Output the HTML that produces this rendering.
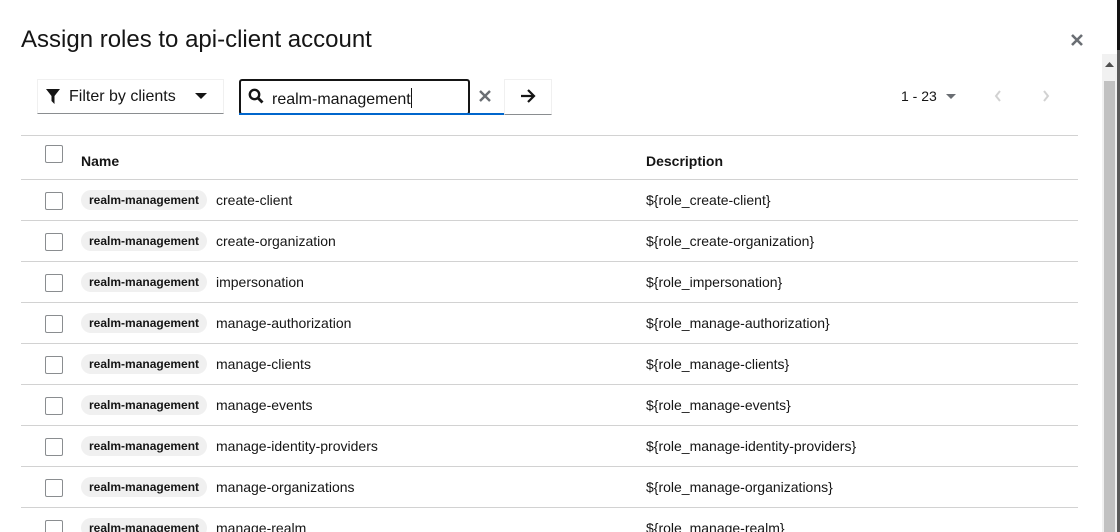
<!DOCTYPE html><html style="height:532px;overflow:hidden"><head><style>
body{margin:0;width:1120px;height:532px;overflow:hidden;background:#fff;font-family:"Liberation Sans",sans-serif;color:#151515;position:relative}
.a{position:absolute}
h1{position:absolute;left:21px;top:26px;margin:0;font-size:24px;font-weight:400;}
.row{position:absolute;left:21px;width:1057px;height:40px;border-bottom:1px solid #d2d2d2}
.cb{position:absolute;left:24px;top:12px;width:18px;height:18px;border:1px solid #8a8d90;border-radius:2px;box-sizing:border-box}
.badge{position:absolute;left:60px;top:10px;height:20px;line-height:21px;padding:0 8px;background:#f0f0f0;border-radius:10px;font-size:12px;font-weight:700}
.nm{position:absolute;left:195px;top:12px;font-size:14px}
.ds{position:absolute;left:625px;top:12px;font-size:14px}
</style></head><body>
<h1>Assign roles to api-client account</h1>
<svg class="a" style="left:1070px;top:33px" width="14" height="14" viewBox="0 0 14 14"><path d="M2 2L12 12M12 2L2 12" stroke="#6a6e73" stroke-width="2.6"/></svg>
<div class="a" style="left:37px;top:79px;width:187px;height:35px;border:1px solid #f0f0f0;border-bottom-color:#8a8d90;box-sizing:border-box"></div>
<svg class="a" style="left:46px;top:89px" width="14" height="15" viewBox="0 0 14 15"><path d="M0 0H14L8.5 7V15L5.5 12V7Z" fill="#151515"/></svg>
<div class="a" style="left:69px;top:88px;font-size:16px">Filter by clients</div>
<svg class="a" style="left:195px;top:93px" width="12" height="7"><path d="M0 0H12L6 6Z" fill="#151515"/></svg>
<div class="a" style="left:239px;top:79px;width:231px;height:36px;border:2px solid #151515;border-radius:3px;box-sizing:border-box"></div>
<div class="a" style="left:239px;top:113px;width:265px;height:2px;background:#06c"></div>
<svg class="a" style="left:248px;top:88px" width="16" height="16" viewBox="0 0 16 16"><circle cx="6.5" cy="6.5" r="4.7" fill="none" stroke="#151515" stroke-width="2.4"/><path d="M10 10L14.5 14.5" stroke="#151515" stroke-width="2.8"/></svg>
<div class="a" style="left:272px;top:88px;font-size:16px">realm-management<span style="display:inline-block;width:1px;height:20px;background:#151515;vertical-align:-4px"></span></div>
<svg class="a" style="left:479px;top:90px" width="12" height="12"><path d="M1 1L11 11M11 1L1 11" stroke="#6a6e73" stroke-width="2.4"/></svg>
<div class="a" style="left:504px;top:79px;width:48px;height:36px;border:1px solid #f0f0f0;border-bottom-color:#8a8d90;box-sizing:border-box"></div>
<svg class="a" style="left:520px;top:89px" width="16" height="14" viewBox="0 0 16 14"><path d="M1 7H14M8 1L14 7L8 13" fill="none" stroke="#151515" stroke-width="2.2"/></svg>
<div class="a" style="left:901px;top:88px;font-size:14px">1 - 23</div>
<svg class="a" style="left:946px;top:94px" width="10" height="5"><path d="M0 0H10L5 5Z" fill="#6a6e73"/></svg>
<svg class="a" style="left:994px;top:90px" width="8" height="12"><path d="M6 1L2 6L6 11" fill="none" stroke="#d2d2d2" stroke-width="2"/></svg>
<svg class="a" style="left:1042px;top:90px" width="8" height="12"><path d="M2 1L6 6L2 11" fill="none" stroke="#d2d2d2" stroke-width="2"/></svg>
<div class="a" style="left:21px;top:135px;width:1057px;height:1px;background:#d2d2d2"></div>
<div class="row" style="top:136px;height:43px"><div class="cb" style="top:9px"></div><div class="a" style="left:60px;top:17px;font-size:14px;font-weight:700">Name</div><div class="a" style="left:625px;top:17px;font-size:14px;font-weight:700">Description</div></div>
<div class="row" style="top:180px"><div class="cb"></div><div class="badge">realm-management</div><div class="nm">create-client</div><div class="ds">${role_create-client}</div></div>
<div class="row" style="top:221px"><div class="cb"></div><div class="badge">realm-management</div><div class="nm">create-organization</div><div class="ds">${role_create-organization}</div></div>
<div class="row" style="top:262px"><div class="cb"></div><div class="badge">realm-management</div><div class="nm">impersonation</div><div class="ds">${role_impersonation}</div></div>
<div class="row" style="top:303px"><div class="cb"></div><div class="badge">realm-management</div><div class="nm">manage-authorization</div><div class="ds">${role_manage-authorization}</div></div>
<div class="row" style="top:344px"><div class="cb"></div><div class="badge">realm-management</div><div class="nm">manage-clients</div><div class="ds">${role_manage-clients}</div></div>
<div class="row" style="top:385px"><div class="cb"></div><div class="badge">realm-management</div><div class="nm">manage-events</div><div class="ds">${role_manage-events}</div></div>
<div class="row" style="top:426px"><div class="cb"></div><div class="badge">realm-management</div><div class="nm">manage-identity-providers</div><div class="ds">${role_manage-identity-providers}</div></div>
<div class="row" style="top:467px"><div class="cb"></div><div class="badge">realm-management</div><div class="nm">manage-organizations</div><div class="ds">${role_manage-organizations}</div></div>
<div class="row" style="top:508px;height:24px;border:none;overflow:hidden"><div class="cb"></div><div class="badge">realm-management</div><div class="nm">manage-realm</div><div class="ds">${role_manage-realm}</div></div>
<div class="a" style="left:1102px;top:54px;width:15px;height:478px;background:#f1f1f1"></div>
<div class="a" style="left:1104px;top:81px;width:11px;height:451px;background:#c1c1c1"></div>
<svg class="a" style="left:1105px;top:62px" width="9" height="5"><path d="M0 5H9L4.5 0Z" fill="#505050"/></svg>
<div class="a" style="left:1117px;top:0;width:3px;height:532px;background:#5a5a5a"></div>
<div class="a" style="left:1117px;top:0;width:3px;height:50px;background:#111"></div>
</body></html>
